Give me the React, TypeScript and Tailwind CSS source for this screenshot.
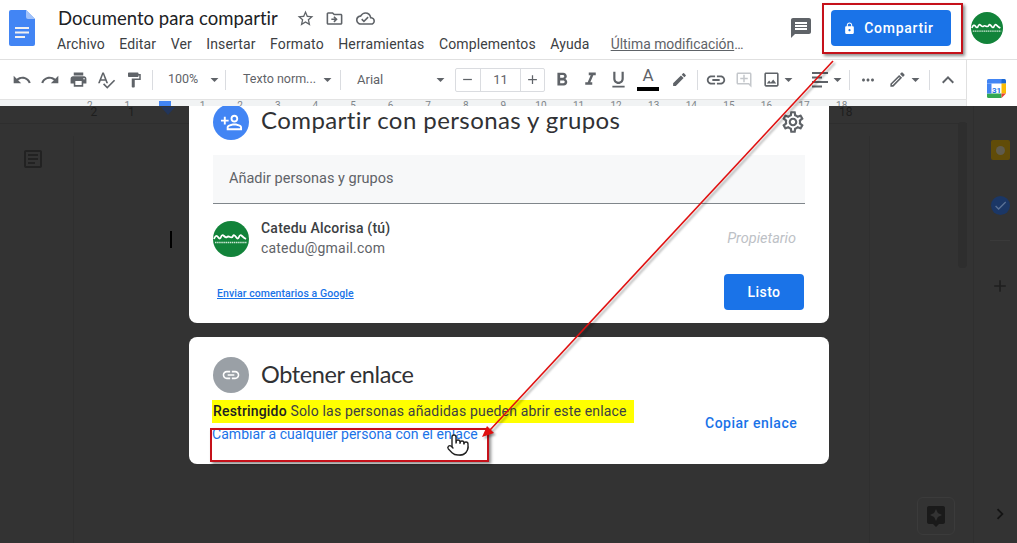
import React from "react";
import {
  MdUndo, MdRedo, MdPrint, MdSpellcheck, MdFormatPaint, MdArrowDropDown, MdRemove, MdAdd,
  MdFormatBold, MdFormatItalic, MdFormatUnderlined, MdEdit, MdLink, MdOutlineAddComment,
  MdOutlineImage, MdMoreHoriz, MdOutlineEdit, MdExpandLess, MdMessage, MdLock, MdOutlinePersonAddAlt,
  MdOutlineSettings, MdStarBorder, MdOutlineDriveFileMove, MdOutlineCloudDone, MdAssistant,
  MdChevronRight, MdCheck, MdOutlineArticle,
} from "react-icons/md";
import { Pointer } from "lucide-react";

function Avatar({ size }: { size: number }) {
  return (
    <svg width={size} height={size} viewBox="0 0 36 36" className="shrink-0">
      <circle cx="18" cy="18" r="18" fill="#12833a" />
      <path d="M1 18q2-5 4 -2t3 0t3-1t3 1t3 0t3-1t3 1t3 0t3-1t4 3" fill="none" stroke="#fff" strokeWidth="1.8" />
      <path d="M2 21.5h32" stroke="#cfe8d6" strokeWidth="1.4" strokeDasharray="1.5 .6" />
    </svg>
  );
}

function Sep({ ml, mr }: { ml: string; mr: string }) {
  return <div className={`w-px h-[20px] bg-[#dadce0] shrink-0 ${ml} ${mr}`} />;
}

function Tool({ children, w = "w-[28px]" }: { children: React.ReactNode; w?: string }) {
  return <div className={`${w} h-[28px] flex items-center justify-center text-[#5f6368] shrink-0`}>{children}</div>;
}

function Caret({ className = "" }: { className?: string }) {
  return <MdArrowDropDown size={19} className={`text-[#5f6368] shrink-0 ${className}`} />;
}

const rulerNums = ["2", "1", "", "1", "2", "3", "4", "5", "6", "7", "8", "9", "10", "11", "12", "13", "14", "15", "16", "17", "18"];
const dimRulerNums = ["2", "1", "", "", "", "", "", "", "", "", "", "", "", "", "", "", "", "", "", "", "18"];

function RulerDigits({ className, nums }: { className: string; nums: string[] }) {
  return (
    <div className={`flex ${className}`}>
      {nums.map((n, i) => (
        <div key={i} className="w-[37.6px] shrink-0 text-center leading-[12px]">{n}</div>
      ))}
    </div>
  );
}

export default function App() {
  return (
    <div className="relative w-[1017px] h-[543px] overflow-hidden bg-white flex flex-col font-['Roboto',sans-serif]">
      {/* Header */}
      <header className="h-[60px] shrink-0 flex bg-white border-b border-[#e0e0e0]">
        <svg width="26" height="36" viewBox="0 0 26 36" className="ml-[9px] mt-[10px] shrink-0">
          <path d="M2 0h15l9 9v25a2 2 0 0 1-2 2H2a2 2 0 0 1-2-2V2a2 2 0 0 1 2-2z" fill="#4285f4" />
          <path d="M17 0l9 9h-7a2 2 0 0 1-2-2z" fill="#a1c2fa" />
          <path d="M6 17h14v2H6zM6 21.5h14v2H6zM6 26h10v2H6z" fill="#f1f1f1" />
        </svg>
        <div className="ml-[23px] flex flex-col w-[700px]">
          <div className="flex items-center h-[26px] mt-[5px]">
            <span className="text-[18.5px] leading-[26px] text-[#202124] font-['Lato',sans-serif] tracking-[0.03px]">Documento para compartir</span>
            <MdStarBorder size={19} className="ml-[18px] text-[#5f6368]" />
            <MdOutlineDriveFileMove size={19} className="ml-[10px] text-[#5f6368]" />
            <MdOutlineCloudDone size={19} className="ml-[12px] text-[#5f6368]" />
          </div>
          <nav className="flex items-center h-[20px] mt-[3px] -ml-px text-[14px] leading-[20px] text-[#3c4043] tracking-[.15px]">
            <span>Archivo</span>
            <span className="ml-[14.4px]">Editar</span>
            <span className="ml-[14.4px]">Ver</span>
            <span className="ml-[14.4px]">Insertar</span>
            <span className="ml-[14.4px]">Formato</span>
            <span className="ml-[14.4px]">Herramientas</span>
            <span className="ml-[14.4px]">Complementos</span>
            <span className="ml-[14.4px]">Ayuda</span>
            <span className="ml-[21px] text-[#5f6368] whitespace-nowrap tracking-normal text-[13.9px]"><span className="underline">Última modificación</span>…</span>
          </nav>
        </div>
        <div className="flex-1" />
        <MdMessage size={24} className="mt-[16px] text-[#5f6368] shrink-0 -ml-[1px]" />
        <div className="ml-[18px] mt-[10px] w-[120px] h-[36px] rounded-[4px] bg-[#1a73e8] flex items-center justify-center gap-[8px] text-white text-[14px] font-medium tracking-[.7px] shrink-0 pr-[5px]">
          <MdLock size={13} />
          <span>Compartir</span>
        </div>
        <div className="ml-[20px] mr-[14px] mt-[12px]"><Avatar size={32} /></div>
      </header>

      <div className="flex-1 flex min-h-0">
        {/* Left: toolbar, ruler and document */}
        <div className="w-[967px] shrink-0 flex flex-col min-h-0">
          <div className="h-[39px] shrink-0 flex items-center pl-[8px] text-[#5f6368] border-r border-[#e0e0e0]">
            <Tool><MdUndo size={20} /></Tool>
            <Tool><MdRedo size={20} /></Tool>
            <Tool><MdPrint size={19} /></Tool>
            <Tool><MdSpellcheck size={20} /></Tool>
            <Tool><MdFormatPaint size={18} /></Tool>
            <Sep ml="ml-[4px]" mr="mr-[15px]" />
            <span className="w-[35px] text-[12.5px] shrink-0">100%</span>
            <Caret className="ml-[2px]" />
            <Sep ml="ml-[1px]" mr="mr-[17px]" />
            <span className="w-[77px] text-[12.5px] whitespace-nowrap shrink-0">Texto norm...</span>
            <Caret className="-ml-[2px]" />
            <Sep ml="ml-[3px]" mr="mr-[16px]" />
            <span className="w-[74px] text-[13px] shrink-0">Arial</span>
            <Caret />
            <div className="ml-[5px] flex h-[24px] w-[90px] border border-[#dadce0] rounded-[2px] items-center shrink-0">
              <div className="w-[24px] flex justify-center"><MdRemove size={15} /></div>
              <div className="w-[42px] h-full border-x border-[#dadce0] flex items-center justify-center text-[13px]">11</div>
              <div className="w-[23px] flex justify-center"><MdAdd size={15} /></div>
            </div>
            <Tool w="w-[28px] ml-[3px]"><MdFormatBold size={22} /></Tool>
            <Tool><MdFormatItalic size={21} /></Tool>
            <Tool><MdFormatUnderlined size={21} /></Tool>
            <div className="ml-[2px] w-[28px] h-[28px] flex flex-col items-center shrink-0">
              <span className="text-[17px] leading-[21px] mt-[-1px]">A</span>
              <div className="w-[22px] h-[4px] bg-black mt-[1px]" />
            </div>
            <Tool w="w-[32px] ml-[1px]"><MdEdit size={17} /></Tool>
            <Sep ml="ml-[2px]" mr="mr-[4px]" />
            <Tool w="w-[28px]"><MdLink size={22} /></Tool>
            <Tool w="w-[28px]"><MdOutlineAddComment size={18} className="text-[#c4c7cb]" /></Tool>
            <Tool w="w-[27px]"><MdOutlineImage size={19} /></Tool>
            <Caret className="-ml-[6px]" />
            <div className="w-[13px] shrink-0" />
            <svg width="18" height="16" viewBox="0 0 18 16" className="shrink-0">
              <path d="M1 1h16M1 5.5h10M1 10h16M1 14.5h10" stroke="#5f6368" strokeWidth="1.8" />
            </svg>
            <Caret className="-ml-[1px]" />
            <Sep ml="ml-[2px]" mr="mr-[4px]" />
            <Tool><MdMoreHoriz size={18} /></Tool>
            <Tool w="w-[30px]"><MdOutlineEdit size={19} /></Tool>
            <Caret className="-ml-[6px]" />
            <Sep ml="ml-[4px]" mr="mr-[4px]" />
            <Tool><MdExpandLess size={24} /></Tool>
          </div>
          <div className="relative h-[7px] shrink-0 bg-[#f1f3f4] overflow-hidden border-t border-r border-[#e3e3e3]">
            <RulerDigits nums={rulerNums} className="pl-[71px] text-[10px] text-[#80868b]" />
            <div className="absolute left-[159px] top-[1px] w-[12px] h-[6px] bg-[#4285f4]" />
          </div>

          {/* Document area */}
          <div className="relative flex-1 min-h-0 bg-[#333333] overflow-hidden flex flex-col pl-[189px]">
            {/* dim surface marks behind the dialog */}
            <RulerDigits nums={dimRulerNums} className="absolute left-[75px] top-[0px] text-[12px] text-[#1e1e1e] w-[900px]" />
            <div className="absolute left-[73px] top-[30px] bottom-0 w-px bg-[#2f2f2f]" />
            <div className="absolute left-[869px] top-[30px] bottom-0 w-px bg-[#2f2f2f]" />
            <div className="absolute left-0 right-0 top-[17px] h-px bg-[#2e2e2e]" />
            <div className="absolute left-[161px] top-[1px] border-x-[7px] border-x-transparent border-t-[8px] border-t-[#22355a]" />
            <MdOutlineArticle size={24} className="absolute left-[21px] top-[41px] text-[#222222]" />
            <div className="absolute left-[170px] top-[125px] w-[2px] h-[17px] bg-black" />
            <div className="absolute left-[958px] top-[16px] w-[9px] h-[146px] rounded-[4px] bg-[#2e2e2e]" />
            <div className="absolute left-[917px] top-[391px] w-[38px] h-[38px] rounded-[6px] border border-[#3b3b3b] flex items-center justify-center">
              <MdAssistant size={24} className="text-[#1a1a1a]" />
            </div>

            {/* Dialog card: people */}
            <section className="relative w-[640px] h-[217px] bg-white rounded-b-[8px] shrink-0 px-[24px] flex flex-col overflow-hidden">
              <div className="flex items-center -mt-[2px] h-[36px] shrink-0">
                <div className="w-[36px] h-[36px] rounded-full bg-[#4285f4] flex items-center justify-center shrink-0">
                  <MdOutlinePersonAddAlt size={23} className="text-white -scale-x-100" />
                </div>
                <h2 className="ml-[12px] -mt-[4px] text-[24px] leading-[28px] text-[#303134] font-['Lato',sans-serif] tracking-[.42px] whitespace-nowrap">Compartir con personas y grupos</h2>
                <div className="flex-1" />
                <MdOutlineSettings size={26} className="text-[#5f6368] -mr-[1px]" />
              </div>
              <div className="mt-[15px] h-[49px] w-[592px] bg-[#f7f8f9] border-b border-[#80868b] flex items-center pl-[16px] text-[14.5px] text-[#5f6368] shrink-0">Añadir personas y grupos</div>
              <div className="mt-[17px] flex items-center h-[36px] shrink-0">
                <Avatar size={36} />
                <div className="ml-[12px] flex flex-col -mt-[2px]">
                  <span className="text-[14px] leading-[20px] font-medium text-[#3c4043] tracking-[.22px]">Catedu Alcorisa (tú)</span>
                  <span className="text-[14px] leading-[20px] text-[#5f6368] tracking-[.2px]">catedu@gmail.com</span>
                </div>
                <div className="flex-1" />
                <span className="italic text-[14.5px] text-[#bdc1c6] mr-[9px]">Propietario</span>
              </div>
              <div className="mt-[17px] flex items-center h-[36px] pl-[4px] pr-[1px] shrink-0">
                <span className="text-[10.5px] font-medium text-[#1a73e8] underline tracking-[.07px] mt-[3px]">Enviar comentarios a Google</span>
                <div className="flex-1" />
                <div className="w-[80px] h-[36px] rounded-[4px] bg-[#1a73e8] text-white text-[14px] font-medium tracking-[.4px] flex items-center justify-center">Listo</div>
              </div>
            </section>

            {/* Dialog card: link */}
            <section className="mt-[14px] w-[640px] h-[127px] bg-white rounded-[8px] shrink-0 px-[24px] pt-[20px] flex flex-col">
              <div className="flex items-center h-[36px]">
                <div className="w-[36px] h-[36px] rounded-full bg-[#9aa0a6] flex items-center justify-center shrink-0">
                  <MdLink size={20} className="text-white" />
                </div>
                <h2 className="ml-[12px] -mt-[3px] text-[23.5px] leading-[28px] text-[#303134] font-['Lato',sans-serif] tracking-[-.4px]">Obtener enlace</h2>
              </div>
              <div className="flex mt-[7px]">
                <div className="flex flex-col -ml-px">
                  <p className="w-[422px] h-[23px] pl-px bg-[#ffff00] text-[14px] leading-[23px] text-[#3c4043] whitespace-nowrap tracking-[.18px]"><b className="font-medium text-[#202124]">Restringido</b> Solo las personas añadidas pueden abrir este enlace</p>
                  <span className="mt-[1px] text-[14px] leading-[20px] text-[#1a73e8] whitespace-nowrap tracking-[.05px]">Cambiar a cualquier persona con el enlace</span>
                </div>
                <span className="ml-[71px] mt-[13px] text-[14px] leading-[20px] font-medium tracking-[.5px] text-[#1a73e8] whitespace-nowrap">Copiar enlace</span>
              </div>
            </section>
          </div>
        </div>

        {/* Right side panel */}
        <aside className="relative flex-1 flex flex-col min-h-0">
          <div className="h-[46px] w-full bg-white flex justify-center items-end pb-[8px] pl-[8px] shrink-0">
            <svg width="19" height="19" viewBox="0 0 19 19">
              <rect width="19" height="19" rx="1.5" fill="#fff" />
              <path d="M14.5 0H1.5A1.5 1.5 0 0 0 0 1.5V4.500h19V4.500L14.500 0z" fill="#4285f4" />
              <path d="M14.500 0v4.500H19V1.500A1.500 1.500 0 0 0 17.500 0z" fill="#1967d2" />
              <path d="M14.500 4.500H19V14.500h-4.500z" fill="#fbbc04" />
              <path d="M0 14.500V17.500A1.500 1.500 0 0 0 1.500 19H14.500V14.500z" fill="#34a853" />
              <path d="M0 4.500h4.500V14.500H0z" fill="#4285f4" />
              <path d="M14.500 14.500V19L19 14.500z" fill="#ea4335" />
              <text x="9.500" y="13.500" fontSize="8" textAnchor="middle" fill="#1a73e8" fontFamily="Roboto" fontWeight="700">31</text>
            </svg>
          </div>
          <div className="flex-1 w-full bg-[#333333] flex flex-col items-center pl-[16px] relative">
            <div className="absolute left-[6px] top-0 bottom-0 w-px bg-[#2f2f2f]" />
            <div className="mt-[34px] w-[19px] h-[20px] rounded-[2px] bg-[#614c08] flex items-center justify-center">
              <div className="w-[9px] h-[9px] rounded-full bg-[#5f5b4d]" />
            </div>
            <div className="mt-[36px] w-[19px] h-[19px] rounded-full bg-[#1b3766] flex items-center justify-center">
              <MdCheck size={15} className="text-[#5a7195]" />
            </div>
            <div className="mt-[25px] w-[20px] h-px bg-[#3a3a3a]" />
            <MdAdd size={20} className="mt-[35px] text-[#1f1f1f]" />
            <div className="flex-1" />
            <MdChevronRight size={22} className="mb-[18px] text-[#141414]" />
          </div>
        </aside>
      </div>

      {/* Annotations over the screenshot */}
      <div className="absolute left-[822px] top-[3px] w-[141px] h-[51px] border-2 border-[#c5111a] shadow-[2px_2px_3px_rgba(0,0,0,0.45)]" />
      <div className="absolute left-[210px] top-[428px] w-[279px] h-[34px] border-2 border-[#c5111a] shadow-[2px_2px_3px_rgba(0,0,0,0.45)]" />
      <svg width="1017" height="543" viewBox="0 0 1017 543" className="absolute left-0 top-0 pointer-events-none drop-shadow-[2px_2px_1px_rgba(0,0,0,0.35)]">
        <path d="M833 61L490 430" stroke="#e01010" strokeWidth="1.6" fill="none" />
        <path d="M482 437L487 426L494 433z" fill="#e01010" />
      </svg>
      <Pointer size={24} strokeWidth={1.4} className="absolute left-[446px] top-[433px] text-[#222222] fill-white" />
    </div>
  );
}
